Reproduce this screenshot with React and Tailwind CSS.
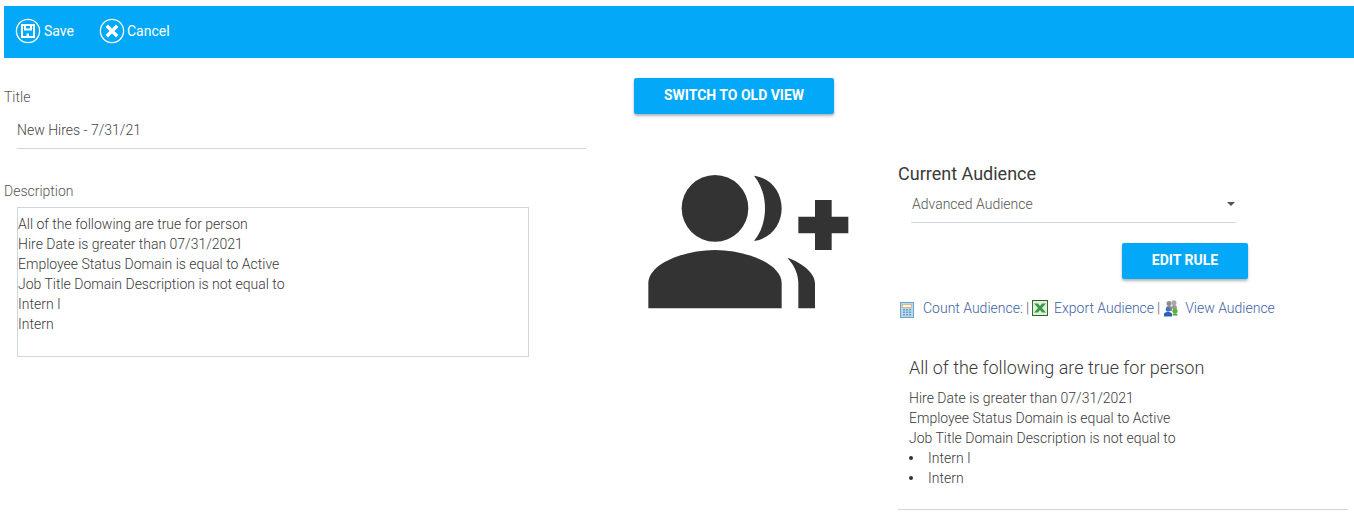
import React from "react";

const SaveIcon = () => (
  <svg width="26" height="26" viewBox="0 0 26 26" className="shrink-0">
    <circle cx="13" cy="13" r="11.6" fill="none" stroke="#fff" strokeWidth="1.3" />
    <path d="M7 7h12v12H7z" fill="none" stroke="#fff" strokeWidth="2" />
    <path d="M10 7v4.5h6V7" fill="none" stroke="#fff" strokeWidth="2" />
    <rect x="11.5" y="15.5" width="2.5" height="2.5" fill="#fff" />
  </svg>
);

const CancelIcon = () => (
  <svg width="26" height="26" viewBox="0 0 26 26" className="shrink-0">
    <circle cx="13" cy="13" r="11.6" fill="none" stroke="#fff" strokeWidth="1.3" />
    <path d="M7.8 7.8l10.4 10.4M18.2 7.8L7.8 18.2" stroke="#fff" strokeWidth="3.4" />
  </svg>
);

const Audience = () => (
  <svg width="202" height="135" viewBox="54 45 606 405" className="block">
    <g fill="#333">
      <circle cx="255" cy="145" r="100" />
      <path d="M372 47C425 55 455 98 455 145C455 192 425 235 372 243C395 215 405 180 405 145C405 110 395 75 372 47Z" />
      <path d="M555 120h50v50h50v50h-50v50h-50v-50h-50v-50h50z" />
      <path d="M55 445V370C55 310 165 270 255 270C345 270 455 310 455 370V445Z" />
      <path d="M472 293C520 310 555 340 555 370V445H505V370C505 345 495 318 472 293Z" />
    </g>
  </svg>
);

const CalcIcon = () => (
  <svg width="14" height="16" viewBox="0 0 14 16" className="shrink-0">
    <rect x="0.5" y="0.5" width="13" height="15" fill="#b9d8ec" stroke="#6aa5cc" />
    <rect x="2.5" y="2.5" width="9" height="3" fill="#f2f8fc" stroke="#e0a45a" strokeWidth="0.7" />
    <g fill="#6d9dc0">
      <rect x="3" y="7" width="2" height="1.5" />
      <rect x="6" y="7" width="2" height="1.5" />
      <rect x="9" y="7" width="2" height="1.5" />
      <rect x="3" y="9.5" width="2" height="1.5" />
      <rect x="6" y="9.5" width="2" height="1.5" />
      <rect x="9" y="9.5" width="2" height="1.5" />
      <rect x="3" y="12" width="2" height="1.5" />
      <rect x="6" y="12" width="2" height="1.5" />
      <rect x="9" y="12" width="2" height="1.5" />
    </g>
  </svg>
);

const ExcelIcon = () => (
  <svg width="16" height="16" viewBox="0 0 16 16" className="shrink-0">
    <rect x="0.5" y="0.5" width="15" height="15" fill="#e4efd9" stroke="#2f6b35" />
    <path d="M2 3.5h4l2 2.6 2-2.6h4l-4 4.5 4 4.5h-4L8 9.9l-2 2.6H2l4-4.5z" fill="#3a9a4a" />
  </svg>
);

const PeopleIcon = () => (
  <svg width="16" height="17" viewBox="0 0 16 17" className="shrink-0">
    <circle cx="6" cy="3.5" r="2.5" fill="#8d8d8d" />
    <circle cx="11" cy="2.8" r="2.5" fill="#a8a8a8" />
    <path d="M3 11V7.5C3 6.5 5 6 6 6s3 .5 3 1.5V11z" fill="#8a8a8a" />
    <path d="M8.5 9V6.5C8.5 5.5 10 5 11 5s2.8.5 2.8 1.5V9z" fill="#9c9c9c" />
    <circle cx="5" cy="9.5" r="2.3" fill="#3f73c9" />
    <path d="M1 16.5v-2.7C1 12.5 3.5 12 5 12s4 .5 4 1.8v2.7z" fill="#2e5fb8" />
    <circle cx="12" cy="11" r="2.6" fill="#55b23f" />
    <path d="M9.5 15c0-1 1.2-1.5 2.5-1.5s2.5.5 2.5 1.5v.5h-5z" fill="#4aa338" />
  </svg>
);

const btn =
  "flex items-center justify-center rounded-[2px] bg-[#03a9f8] text-white text-sm font-bold pb-[2px] shadow-[0_2px_3px_rgba(0,0,0,0.3)]";

export default function App() {
  return (
    <div className="bg-white h-[518px] overflow-hidden pt-[6px] pl-[4px] font-['Roboto',sans-serif] text-sm font-light text-[#3a3a3a]">
      <header className="h-[52px] bg-[#03a9f8] flex items-center pl-[11px] pb-[2px] text-white font-normal">
        <div className="flex items-center gap-[3px] w-[84px]">
          <SaveIcon />
          <span>Save</span>
        </div>
        <div className="flex items-center gap-[2px]">
          <CancelIcon />
          <span>Cancel</span>
        </div>
      </header>

      <main className="flex">
        <section className="w-[582px] shrink-0 pt-[29px]">
          <label className="block leading-5 text-[#555]">Title</label>
          <div className="ml-[13px] mt-[13px] h-[29px] border-b border-[#ced8dc] leading-5 text-[#444]">
            New Hires - 7/31/21
          </div>
          <label className="block leading-5 mt-[32px] text-[#555]">Description</label>
          <div className="ml-[13px] mt-[6px] w-[512px] h-[150px] border border-[#ced8dc] pt-[6px] leading-5">
            <div>All of the following are true for person</div>
            <div>Hire Date is greater than 07/31/2021</div>
            <div>Employee Status Domain is equal to Active</div>
            <div>Job Title Domain Description is not equal to</div>
            <div>Intern I</div>
            <div>Intern</div>
          </div>
        </section>

        <section className="w-[310px] shrink-0 pl-[48px] pt-[20px]">
          <button className={btn + " w-[200px] h-[36px]"}>SWITCH TO OLD VIEW</button>
          <div className="ml-[14px] mt-[61px]">
            <Audience />
          </div>
        </section>

        <section className="w-[450px] shrink-0 ml-[2px] pt-[104px]">
          <h2 className="text-lg font-normal leading-[24px]">Current Audience</h2>
          <div className="ml-[13px] mt-[1px] w-[325px] h-[36px] border-b border-[#ced8dc] flex items-center justify-between pl-px pr-px pb-[2px] leading-5 text-[#555]">
            <span>Advanced Audience</span>
            <span className="w-0 h-0 border-x-[4px] border-x-transparent border-t-[4px] border-t-[#4a5560]" />
          </div>
          <div className="flex ml-[224px] mt-[20px]">
            <button className={btn + " w-[126px] h-[36px]"}>EDIT RULE</button>
          </div>
          <div className="flex items-center mt-[19px] h-[20px] text-[#3f5fa5] whitespace-nowrap">
            <span className="ml-[2px] mt-[3px]"><CalcIcon /></span>
            <span className="ml-[9px]">Count Audience:</span>
            <span className="ml-[3px] text-[#555]">|</span>
            <span className="ml-[3px]"><ExcelIcon /></span>
            <span className="ml-[6px]">Export Audience</span>
            <span className="ml-[3px] text-[#555]">|</span>
            <span className="ml-[3px]"><PeopleIcon /></span>
            <span className="ml-[6px]">View Audience</span>
          </div>
          <div className="ml-[11px] mt-[38px]">
            <h3 className="text-lg leading-[24px]">All of the following are true for person</h3>
            <div className="mt-[8px] leading-5">
              <div>Hire Date is greater than 07/31/2021</div>
              <div>Employee Status Domain is equal to Active</div>
              <div>Job Title Domain Description is not equal to</div>
              <ul>
                <li className="flex items-center">
                  <span className="w-[4px] h-[4px] rounded-full bg-[#333] shrink-0 mr-[15px]" />
                  Intern I
                </li>
                <li className="flex items-center">
                  <span className="w-[4px] h-[4px] rounded-full bg-[#333] shrink-0 mr-[15px]" />
                  Intern
                </li>
              </ul>
            </div>
          </div>
          <hr className="mt-[21px] border-0 border-t border-[#ced8dc]" />
        </section>
      </main>
    </div>
  );
}
